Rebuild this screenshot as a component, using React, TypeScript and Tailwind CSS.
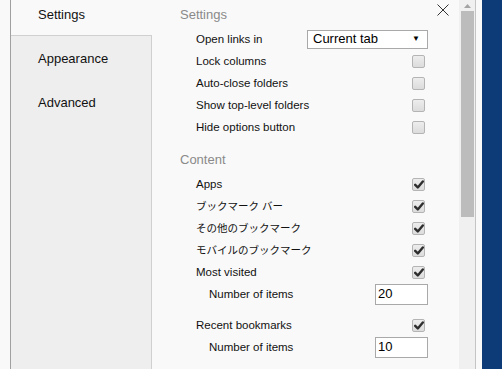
import React from 'react';

const FONT = '[font-family:"Liberation_Sans","Noto_Sans_CJK_JP",sans-serif]';

const Checkbox: React.FC<{ checked?: boolean }> = ({ checked }) => (
  <div className="w-[13px] h-[13px] mr-[3px] rounded-[2px] border border-[#b4b4b4] bg-gradient-to-b from-[#ededed] to-[#dcdcdc] flex items-center justify-center">
    {checked && (
      <svg width="10" height="9" viewBox="0 0 10 9">
        <path d="M1.2 4.8 L3.8 7.4 L8.8 1.4" fill="none" stroke="#2e2e2e" strokeWidth="2.4" strokeLinecap="round" strokeLinejoin="round" />
      </svg>
    )}
  </div>
);

const Row: React.FC<{ label: string; jp?: boolean; indent?: boolean; children?: React.ReactNode; className?: string }> = ({ label, jp, indent, children, className = '' }) => (
  <div className={`h-[22px] flex items-center justify-between ${indent ? 'pl-[29px]' : 'pl-[16px]'} ${className}`}>
    <span className={`${jp ? 'text-[10.5px]' : 'text-[11.5px]'} text-[#111] pt-[1px]`}>{label}</span>
    {children}
  </div>
);

const NumberInput: React.FC<{ value: string }> = ({ value }) => (
  <div className="w-[53px] h-[21px] border border-[#a9a9a9] bg-white flex items-center pl-[2px] text-[13px] text-black">
    {value}
  </div>
);

const App: React.FC = () => {
  return (
    <div className={`w-[502px] h-[369px] flex overflow-hidden bg-[#f9f9f9] ${FONT}`}>
      {/* left gap */}
      <div className="w-[11px] bg-[#f9f9f9] border-r border-[#a0a0a0]" />

      {/* Sidebar */}
      <div className="w-[141px] flex flex-col">
        <div className="h-[36px] pl-[27px] pt-[7px] leading-[16px] text-[13px] text-[#111] bg-[#f9f9f9] border-b border-[#d0d0d0]">
          Settings
        </div>
        <div className="flex-1 bg-[#eeeeee] border-r border-[#d0d0d0] flex flex-col text-[13px] text-[#111]">
          <div className="h-[44px] pl-[27px] pt-[15px] leading-[16px]">Appearance</div>
          <div className="h-[44px] pl-[27px] pt-[15px] leading-[16px]">Advanced</div>
        </div>
      </div>

      {/* Main */}
      <div className="relative w-[307px] pl-[28px] pr-[31px] flex flex-col">
        <div className="absolute top-[4px] left-[285px]">
          <svg width="12" height="12" viewBox="0 0 12 12">
            <path d="M0.5 0.5 L11.5 11.5 M11.5 0.5 L0.5 11.5" stroke="#333" strokeWidth="1" />
          </svg>
        </div>

        <div className="h-[28px] flex items-center pt-[2px] text-[13px] text-[#8a8a8a]">Settings</div>
        <Row label="Open links in">
          <div className="w-[121px] h-[19px] border border-[#a9a9a9] bg-white flex items-center justify-between pl-[5px] pr-[7px] text-[13px] text-black">
            <span>Current tab</span>
            <span className="text-[8px]">▼</span>
          </div>
        </Row>
        <Row label="Lock columns"><Checkbox /></Row>
        <Row label="Auto-close folders"><Checkbox /></Row>
        <Row label="Show top-level folders"><Checkbox /></Row>
        <Row label="Hide options button"><Checkbox /></Row>

        <div className="h-[35px] flex items-center pt-[8px] text-[13px] text-[#8a8a8a]">Content</div>
        <Row label="Apps"><Checkbox checked /></Row>
        <Row label="ブックマーク バー" jp><Checkbox checked /></Row>
        <Row label="その他のブックマーク" jp><Checkbox checked /></Row>
        <Row label="モバイルのブックマーク" jp><Checkbox checked /></Row>
        <Row label="Most visited"><Checkbox checked /></Row>
        <Row label="Number of items" indent><NumberInput value="20" /></Row>
        <Row label="Recent bookmarks" className="mt-[9px]"><Checkbox checked /></Row>
        <Row label="Number of items" indent><NumberInput value="10" /></Row>
      </div>

      {/* Scrollbar */}
      <div className="w-[17px] bg-[#f0f0f0] border-r border-[#c4c4c4] flex flex-col items-center">
        <div className="h-[11px] flex items-center justify-center">
          <svg width="7" height="4" viewBox="0 0 7 4">
            <path d="M0 4 L3.5 0 L7 4 Z" fill="#a3a3a3" />
          </svg>
        </div>
        <div className="w-[13px] h-[206px] bg-[#bcbcbc]" />
      </div>
      <div className="w-[6px] bg-[#f9f9f9]" />
      <div className="flex-1 bg-[#0c3b77]" />
    </div>
  );
};

export default App;
